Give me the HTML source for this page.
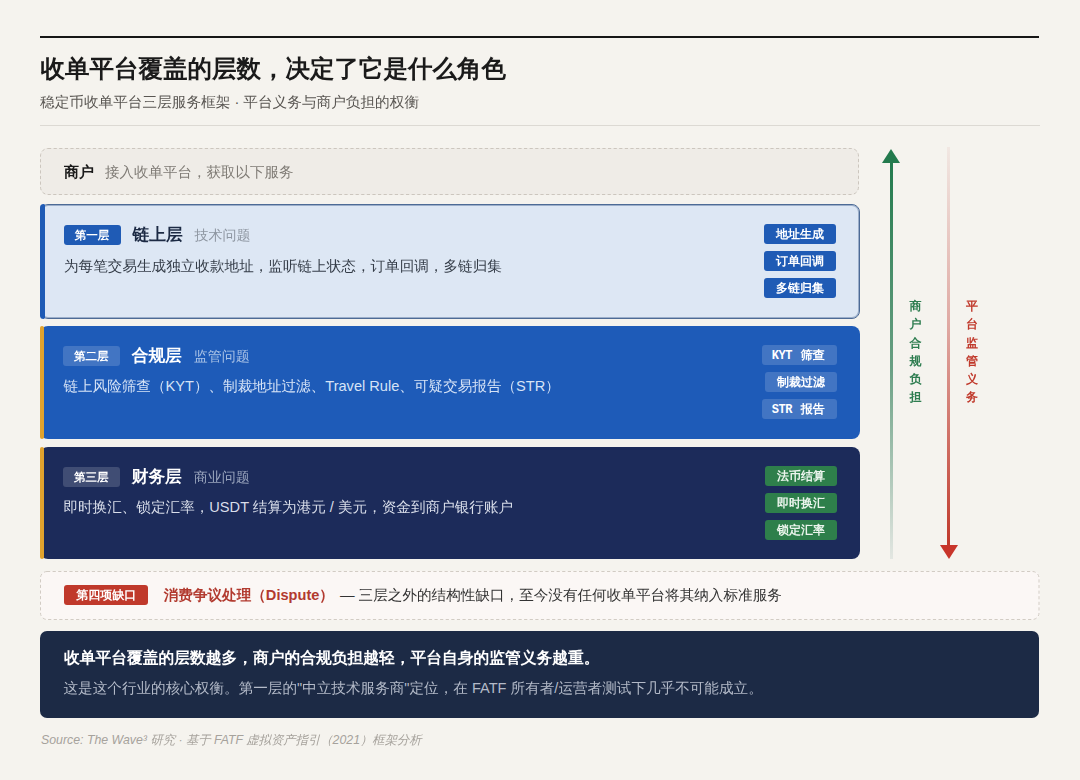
<!DOCTYPE html>
<html lang="zh-CN">
<head>
<meta charset="utf-8">
<style>
*{margin:0;padding:0;box-sizing:border-box;}
html,body{width:1080px;height:780px;overflow:hidden;}
body{background:#f5f3ee;font-family:"Liberation Sans","WenQuanYi Zen Hei",sans-serif;color:#1a1a1a;position:relative;}
.abs{position:absolute;}
.rule{left:40px;top:36px;width:999px;height:2px;background:#161616;}
.title{left:40.4px;top:52.4px;font-size:24.5px;font-weight:900;line-height:34px;white-space:nowrap;color:#1a1a1a;}
.sub{left:40px;top:91px;font-size:14.65px;line-height:22px;color:#595652;white-space:nowrap;}
.sep{left:40px;top:125px;width:1000px;height:1px;background:#dcd9d3;}

.merchant{left:40px;top:148px;width:819px;height:47px;background:#efece7;border-radius:8px;}
.dash{position:absolute;left:0;top:0;overflow:visible;}
.merchant .t{position:absolute;left:24px;top:13px;font-size:14.5px;line-height:22px;white-space:nowrap;}
.merchant b{color:#1a1a1a;font-weight:900;font-size:15px;}
.merchant span{color:#7f7b75;margin-left:11px;}

.card{left:40px;width:819.5px;border-radius:8px;}
.strip{position:absolute;left:0;top:0;bottom:0;width:4px;border-radius:2px;}
.c1{top:204px;height:114.5px;background:#dde7f4;border:1px solid #4d6b96;box-shadow:inset 0 0 0 1px rgba(77,107,150,0.45);}
.c1 .strip{left:-1px;top:-1px;bottom:-1px;width:4.8px;background:#1f5bb5;border-radius:5px 2px 2px 5px;}
.c1 .hd{margin-left:-0.2px;}.c1 .desc{margin-left:-0.4px;margin-top:0.5px;}
.c2{top:326px;height:112.5px;background:#1e5bb8;}
.c2 .strip,.c3 .strip{background:#e0a32e;}
.c3{top:447px;height:112px;background:#1c2b5a;}

.hd{position:absolute;left:22.7px;top:19.5px;height:20px;white-space:nowrap;}
.badge{display:inline-block;vertical-align:top;height:20px;line-height:20px;padding:0 11.25px;font-size:11.5px;font-weight:900;border-radius:3px;color:#fff;}
.ct{display:inline-block;vertical-align:top;margin-left:12px;font-size:16.7px;font-weight:900;line-height:20px;}
.cs{display:inline-block;vertical-align:top;margin-left:12px;font-size:14px;line-height:20px;}
.desc{position:absolute;left:23.4px;top:49px;font-size:14.6px;line-height:22px;white-space:nowrap;}
.tags{position:absolute;right:22.5px;top:18.5px;width:120px;}
.tag{float:right;clear:right;height:20px;line-height:22px;padding:0 11.9px;margin-bottom:7.1px;font-size:12px;font-family:"Liberation Mono","WenQuanYi Zen Hei",monospace;font-weight:900;border-radius:3px;color:#fff;white-space:nowrap;}

.lm{font-size:12px;letter-spacing:-0.45px;word-spacing:2px;}
.tag.tl{padding-left:9.4px;padding-right:12.2px;}
.c1 .badge{background:#1f5bb5;}
.c1 .ct{color:#1c2a44;}
.c1 .cs{color:#8e96a1;}
.c1 .desc{color:#353d48;}
.c1 .tag{background:#1f5bb5;}

.c2 .badge{background:rgba(255,255,255,0.16);}
.c2 .ct{color:#fff;}
.c2 .cs{color:#a9c2e6;}
.c2 .desc{color:#d6e3f6;}
.c2 .tag{background:rgba(255,255,255,0.16);}

.c3 .badge{background:rgba(255,255,255,0.16);}
.c3 .ct{color:#fff;}
.c3 .cs{color:#9aa5bd;}
.c3 .desc{color:#d9deea;}
.c3 .tag{background:#2e7f4b;color:#eaf4ec;}

.gline{left:890px;top:162px;width:3px;height:397px;background:linear-gradient(to bottom,#237a4d,#6aa084 52%,rgba(205,215,210,0.45));}
.ghead{left:882px;top:148.5px;width:0;height:0;border-left:9px solid transparent;border-right:9px solid transparent;border-bottom:14px solid #237a4d;}
.rline{left:947px;top:147px;width:3px;height:399px;background:linear-gradient(to bottom,rgba(225,185,180,0.2),#dfa8a2 45%,#c0392b);}
.rhead{left:940px;top:545px;width:0;height:0;border-left:9px solid transparent;border-right:9px solid transparent;border-top:14px solid #c8352a;}
.vt{font-size:12px;font-weight:900;line-height:18.3px;width:14px;text-align:center;white-space:normal;word-break:break-all;}
.vg{left:908.5px;top:297px;color:#2e7d50;}
.vr{left:965px;top:297px;color:#c0392b;}

.dispute{left:40px;top:570.5px;width:999.5px;height:49px;background:#fbf7f5;border-radius:7px;}
.dispute .row{position:absolute;left:24.2px;top:14.8px;white-space:nowrap;height:20px;}
.dbadge{display:inline-block;vertical-align:top;height:20px;line-height:20px;padding:0 12px;background:#c0392b;color:#fff;font-size:12px;font-weight:900;border-radius:3px;}
.dt{display:inline-block;vertical-align:top;margin-left:15.5px;font-size:14.6px;font-weight:900;line-height:20px;color:#b23a2f;}
.dd{display:inline-block;vertical-align:top;margin-left:6px;font-size:14.6px;line-height:20px;color:#333;}

.summary{left:40px;top:631px;width:999px;height:86.5px;background:#1c2a45;border-radius:7px;}
.summary .s1{position:absolute;left:24px;top:16px;font-size:15.75px;font-weight:900;line-height:22px;color:#fff;white-space:nowrap;}
.summary .s2{position:absolute;left:23.5px;top:46px;font-size:14.6px;line-height:22px;color:#b3bac8;white-space:nowrap;}

.source{left:41px;top:731px;font-size:12.33px;font-style:italic;line-height:18px;color:#a6a29c;white-space:nowrap;}
</style>
</head>
<body>
<div class="abs rule"></div>
<div class="abs title">收单平台覆盖的层数，决定了它是什么角色</div>
<div class="abs sub">稳定币收单平台三层服务框架 · 平台义务与商户负担的权衡</div>
<div class="abs sep"></div>

<div class="abs merchant"><svg class="dash" width="819" height="47"><rect x="0.5" y="0.5" width="818" height="46" rx="7.5" ry="7.5" fill="none" stroke="#ccc6be" stroke-width="1" stroke-dasharray="3.2 2.4"/></svg><div class="t"><b>商户</b><span>接入收单平台，获取以下服务</span></div></div>

<div class="abs card c1"><div class="strip"></div>
  <div class="hd"><span class="badge">第一层</span><span class="ct">链上层</span><span class="cs">技术问题</span></div>
  <div class="desc">为每笔交易生成独立收款地址，监听链上状态，订单回调，多链归集</div>
  <div class="tags"><div class="tag">地址生成</div><div class="tag">订单回调</div><div class="tag">多链归集</div></div>
</div>

<div class="abs card c2"><div class="strip"></div>
  <div class="hd"><span class="badge">第二层</span><span class="ct">合规层</span><span class="cs">监管问题</span></div>
  <div class="desc">链上风险筛查（KYT）、制裁地址过滤、Travel Rule、可疑交易报告（STR）</div>
  <div class="tags"><div class="tag tl"><span class="lm">KYT </span>筛查</div><div class="tag">制裁过滤</div><div class="tag tl"><span class="lm">STR </span>报告</div></div>
</div>

<div class="abs card c3"><div class="strip"></div>
  <div class="hd"><span class="badge">第三层</span><span class="ct">财务层</span><span class="cs">商业问题</span></div>
  <div class="desc">即时换汇、锁定汇率，USDT 结算为港元 / 美元，资金到商户银行账户</div>
  <div class="tags"><div class="tag">法币结算</div><div class="tag">即时换汇</div><div class="tag">锁定汇率</div></div>
</div>

<div class="abs gline"></div>
<div class="abs ghead"></div>
<div class="abs rline"></div>
<div class="abs rhead"></div>
<div class="abs vt vg">商户合规负担</div>
<div class="abs vt vr">平台监管义务</div>

<div class="abs dispute"><svg class="dash" width="999.5" height="49"><rect x="0.5" y="0.5" width="998.5" height="48" rx="6.5" ry="6.5" fill="none" stroke="#d2ccc4" stroke-width="1" stroke-dasharray="3.2 2.4"/></svg><div class="row"><span class="dbadge">第四项缺口</span><span class="dt">消费争议处理（Dispute）</span><span class="dd">— 三层之外的结构性缺口，至今没有任何收单平台将其纳入标准服务</span></div></div>

<div class="abs summary">
  <div class="s1">收单平台覆盖的层数越多，商户的合规负担越轻，平台自身的监管义务越重。</div>
  <div class="s2">这是这个行业的核心权衡。第一层的"中立技术服务商"定位，在 FATF 所有者/运营者测试下几乎不可能成立。</div>
</div>

<div class="abs source">Source: The Wave³ 研究 · 基于 FATF 虚拟资产指引（2021）框架分析</div>
</body>
</html>
